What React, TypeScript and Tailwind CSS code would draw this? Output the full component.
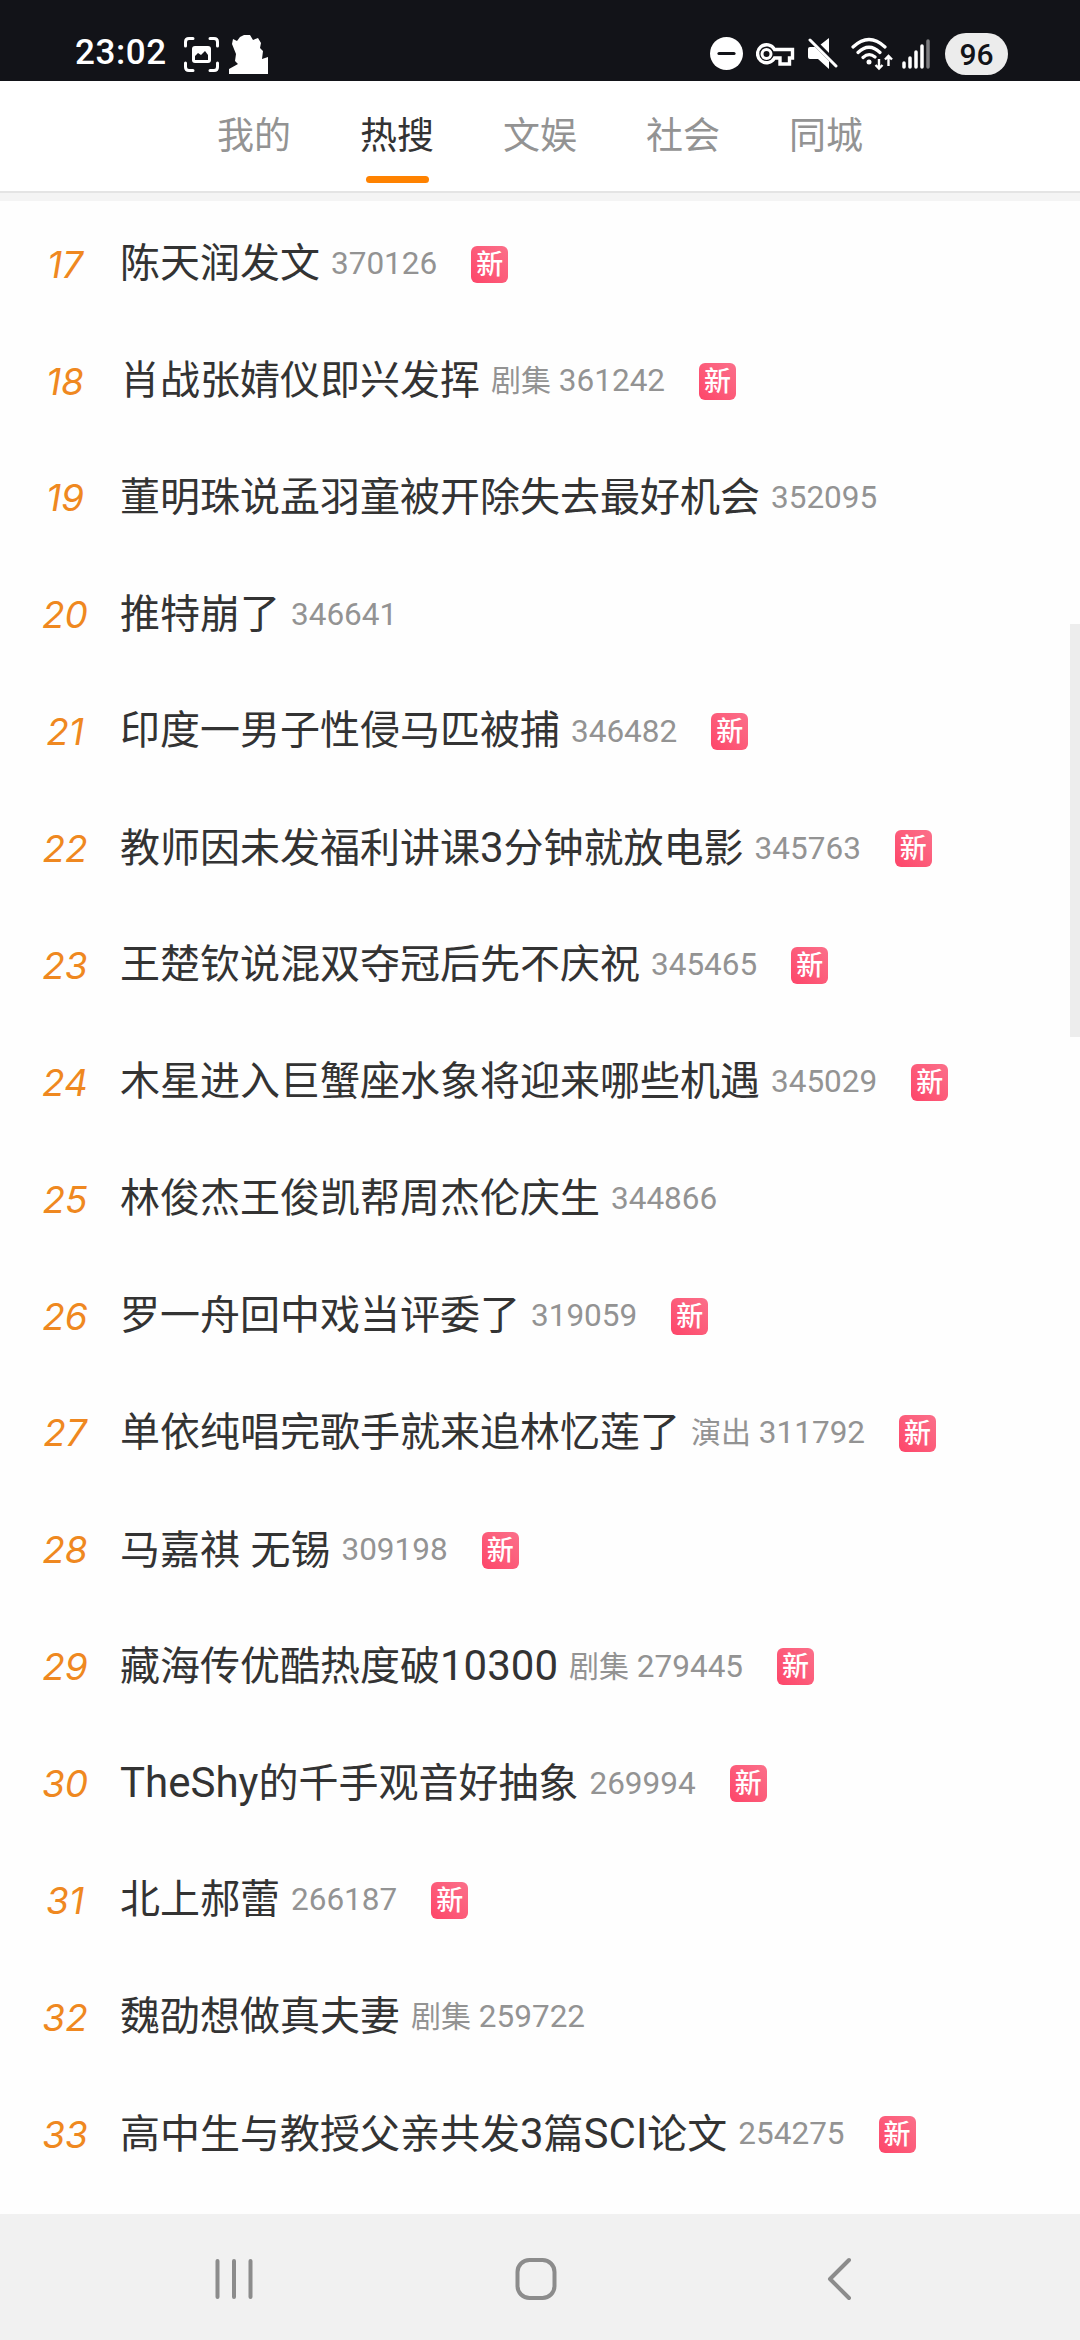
import { Fragment } from "react";

type Topic = { rank: number; title: string; tag?: string; heat: number; isNew?: boolean };

const TABS = ["我的", "热搜", "文娱", "社会", "同城"];
const ACTIVE_TAB = "热搜";

const TOPICS: Topic[] = [
  { rank: 17, title: "陈天润发文", heat: 370126, isNew: true },
  { rank: 18, title: "肖战张婧仪即兴发挥", tag: "剧集", heat: 361242, isNew: true },
  { rank: 19, title: "董明珠说孟羽童被开除失去最好机会", heat: 352095 },
  { rank: 20, title: "推特崩了", heat: 346641 },
  { rank: 21, title: "印度一男子性侵马匹被捕", heat: 346482, isNew: true },
  { rank: 22, title: "教师因未发福利讲课3分钟就放电影", heat: 345763, isNew: true },
  { rank: 23, title: "王楚钦说混双夺冠后先不庆祝", heat: 345465, isNew: true },
  { rank: 24, title: "木星进入巨蟹座水象将迎来哪些机遇", heat: 345029, isNew: true },
  { rank: 25, title: "林俊杰王俊凯帮周杰伦庆生", heat: 344866 },
  { rank: 26, title: "罗一舟回中戏当评委了", heat: 319059, isNew: true },
  { rank: 27, title: "单依纯唱完歌手就来追林忆莲了", tag: "演出", heat: 311792, isNew: true },
  { rank: 28, title: "马嘉祺 无锡", heat: 309198, isNew: true },
  { rank: 29, title: "藏海传优酷热度破10300", tag: "剧集", heat: 279445, isNew: true },
  { rank: 30, title: "TheShy的千手观音好抽象", heat: 269994, isNew: true },
  { rank: 31, title: "北上郝蕾", heat: 266187, isNew: true },
  { rank: 32, title: "魏劭想做真夫妻", tag: "剧集", heat: 259722 },
  { rank: 33, title: "高中生与教授父亲共发3篇SCI论文", heat: 254275, isNew: true },
];

export default function App() {
  return (
    <div className="relative flex h-[2340px] w-[1080px] flex-col overflow-hidden bg-[#fefefe] font-['Roboto','Noto_Sans_CJK_SC',sans-serif]">
      <StatusBar />

      {/* Tabs */}
      <nav className="flex h-[112px] shrink-0 justify-center border-b-2 border-[#e4e4e4] bg-white">
        {TABS.map((tab) => (
          <button key={tab} className="flex w-[143px] flex-col items-center pt-[29px]">
            <span
              className={`h-[54px] text-[37px] leading-[54px] whitespace-nowrap ${
                tab === ACTIVE_TAB ? "text-[#333333]" : "text-[#939393]"
              }`}
            >
              {tab}
            </span>
            {tab === ACTIVE_TAB && <span className="mt-3 h-[7px] w-[63px] rounded-full bg-[#ff8200]" />}
          </button>
        ))}
      </nav>
      <div className="h-2 shrink-0 bg-[#f4f4f4]" />

      {/* Trending list */}
      <main className="flex-1 overflow-hidden pt-[5px]">
        {TOPICS.map((topic) => (
          <TopicRow key={topic.rank} topic={topic} />
        ))}
      </main>

      <div className="absolute top-[624px] right-0 h-[413px] w-[10px] bg-[#ededed]" />

      <NavBar />
    </div>
  );
}

function TopicRow({ topic }: { topic: Topic }) {
  return (
    <div className="flex h-[116.875px] items-center whitespace-nowrap">
      <span className="-mr-[10px] w-[130px] text-center font-['Inter'] text-[37px] text-[#ef8820] italic">
        {topic.rank}
      </span>
      <span className="pb-px text-[40px] leading-none text-[#333333]">
        <Mixed text={topic.title} latinClass="text-[42px]" />
      </span>
      <span className="ml-[11px] pb-px text-[30px] leading-none text-[#939393]">
        <Mixed text={`${topic.tag ? topic.tag + " " : ""}${topic.heat}`} latinClass="text-[31.5px]" />
      </span>
      {topic.isNew && (
        <span className="ml-[34px] flex size-[37px] items-center justify-center rounded-md bg-linear-to-tr from-[#fd4469] to-[#fb6f8a] pt-0.5 text-[27px] leading-none font-medium text-white">
          新
        </span>
      )}
    </div>
  );
}

// latin letters and digits are set a bit larger than the hanzi around them
function Mixed({ text, latinClass }: { text: string; latinClass: string }) {
  return (
    <>
      {text.split(/([A-Za-z0-9 ]+)/).map((part, i) =>
        i % 2 ? (
          <span key={i} className={latinClass}>
            {part}
          </span>
        ) : (
          <Fragment key={i}>{part}</Fragment>
        )
      )}
    </>
  );
}

function StatusBar() {
  return (
    <header className="flex h-[81px] shrink-0 items-start bg-[#121318] pt-[32px] pr-[72px] pl-[75px] text-white">
      <span className="mt-0.5 w-[109px] text-[35px] leading-[38px] font-medium tracking-[0.6px]">23:02</span>
      <svg className="mt-[5px] h-[35px] w-[35px]" viewBox="0 0 35 35" fill="none">
        <path
          d="M1.500 9V5Q1.500 1.500 5 1.500H9M26 1.500h4q3.500 0 3.500 3.500v4M33.500 26v4q0 3.500-3.500 3.500h-4M9 33.500H5Q1.500 33.500 1.500 30v-4"
          stroke="currentColor"
          strokeWidth="3"
          strokeLinecap="round"
        />
        <rect x="8" y="9" width="19" height="17" rx="3" fill="currentColor" />
        <path d="M11 23v-4l3-3 3 2 4-4 3 4v5z" fill="#121318" />
      </svg>
      <svg className="mt-[3px] ml-[10px] h-[39px] w-[39px]" viewBox="0 0 39 39" fill="currentColor">
        <path d="M0 39V34L9 29 6 26 7 19 3 9 4 4 8 6 11 2 15 0H21L24 5 29 3 32 8 31 13 34 16 33 24 39 22V39Z" />
      </svg>

      <div className="ml-auto flex">
        <svg className="mt-[5px] h-[33px] w-[33px]" viewBox="0 0 33 33">
          <circle cx="16.5" cy="16.5" r="16.5" fill="currentColor" />
          <path d="M9 16.500h15" stroke="#121318" strokeWidth="3.2" strokeLinecap="round" />
        </svg>
        <svg className="mt-[11px] ml-[13px] h-[23px] w-[39px]" viewBox="0 0 39 23" fill="none">
          <path
            d="M18.500 6.500H36.500V15H33.500V21H24V15H18.500A9 9 0 1 1 18.500 6.500Z"
            stroke="currentColor"
            strokeWidth="3.4"
          />
          <circle cx="10.5" cy="11" r="4.5" stroke="currentColor" strokeWidth="3" />
        </svg>
        <svg className="mt-[5px] ml-[12px] h-[33px] w-[31px]" viewBox="0 0 31 33" fill="currentColor">
          <path d="M3 10H8L22 24V32L11 22H3Q1 22 1 20V12Q1 10 3 10ZM13 8L22 1V17Z" />
          <path d="M5 1L31 27" stroke="#121318" strokeWidth="3" />
          <path d="M3 3L29 29" stroke="currentColor" strokeWidth="3" strokeLinecap="round" />
        </svg>
        <svg className="mt-[5px] ml-[13px] h-[34px] w-[43px]" viewBox="0 0 43 34" fill="none" stroke="currentColor">
          <path d="M2 10Q18 -5 34 10M7 15.500Q18 5 29 15.500M12 20.500Q18 15 24 20" strokeWidth="3.2" strokeLinecap="round" />
          <circle cx="18" cy="25" r="2.5" fill="currentColor" stroke="none" />
          <path d="M28 22v9M24.500 28l3.500 3.500 3.500-3.500M37.500 29v-9M34 22.500l3.500-3.500 3.500 3.500" strokeWidth="2.4" />
        </svg>
        <svg className="mt-[6px] ml-[8px] h-[31px] w-[28px]" viewBox="0 0 28 31" stroke="currentColor" strokeWidth="3.5" strokeLinecap="round">
          <path d="M2 25v4M8 20v9M14 14v15M20 8v21" />
          <path d="M26 3v26" opacity=".45" />
        </svg>
        <span className="mt-px ml-[15px] flex h-[42px] w-[63px] items-center justify-center rounded-full bg-[#ececec] text-[30px] font-medium text-[#121318]">
          96
        </span>
      </div>
    </header>
  );
}

function NavBar() {
  return (
    <footer className="flex h-[126px] shrink-0 items-start bg-[#f1f1f1] pt-[43px] pl-[214px] text-[#8c8c8c]">
      <svg className="h-[44px] w-[40px]" viewBox="0 0 40 44" stroke="currentColor" strokeWidth="4" strokeLinecap="round">
        <path d="M3.500 4v36M20 4v36M36.500 4v36" />
      </svg>
      <svg className="ml-[260px] h-[44px] w-[44px]" viewBox="0 0 44 44" fill="none" stroke="currentColor" strokeWidth="4">
        <rect x="3.5" y="3" width="37" height="38" rx="12" />
      </svg>
      <svg className="ml-[268px] h-[44px] w-[26px]" viewBox="0 0 26 44" fill="none" stroke="currentColor" strokeWidth="4" strokeLinecap="round" strokeLinejoin="round">
        <path d="M23 3L4 22L23 41" />
      </svg>
    </footer>
  );
}
